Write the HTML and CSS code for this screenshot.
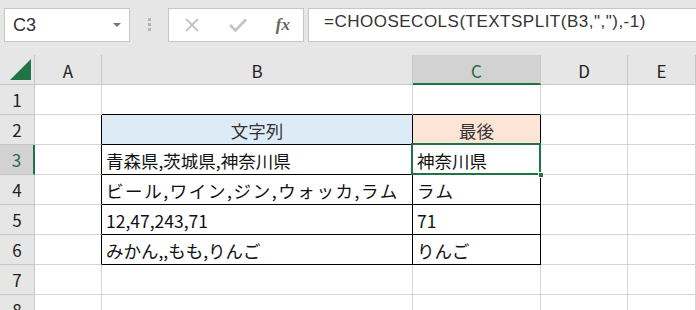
FILE: index.html
```html
<!DOCTYPE html>
<html lang="ja">
<head>
    <meta charset="utf-8">
    <title>TEXTSPLIT</title>
    <link rel="stylesheet" href="styles.css">
</head>
<body>
    <div class="toolbar">
        <div class="name-box">
            <span>C3</span>
            <span class="arrow"></span>
        </div>
        <div class="grip"><i></i><i></i><i></i></div>
        <div class="fx-buttons">
            <svg class="btn" width="18" height="18" viewBox="0 0 18 18"><path d="M3 3 L15 15 M15 3 L3 15" stroke="#c3c3c3" stroke-width="1.8" fill="none"/></svg>
            <svg class="btn" width="20" height="18" viewBox="0 0 20 18"><path d="M2 9 L7.5 14.5 L18 3.5" stroke="#c3c3c3" stroke-width="2.6" fill="none"/></svg>
            <span class="fx">fx</span>
        </div>
        <div class="formula">=CHOOSECOLS(TEXTSPLIT(B3,","),-1)</div>
    </div>

    <div class="sheet">
        <div class="corner"><span class="tri"></span></div>
        <div class="col-head">A</div>
        <div class="col-head">B</div>
        <div class="col-head active">C</div>
        <div class="col-head">D</div>
        <div class="col-head">E</div>

        <div class="row-head">1</div>
        <div class="cell"></div>
        <div class="cell above"></div>
        <div class="cell above"></div>
        <div class="cell"></div>
        <div class="cell"></div>

        <div class="row-head">2</div>
        <div class="cell before"></div>
        <div class="cell boxed head-b">文字列</div>
        <div class="cell boxed head-c">最後</div>
        <div class="cell"></div>
        <div class="cell"></div>

        <div class="row-head active">3</div>
        <div class="cell before"></div>
        <div class="cell boxed">青森県,茨城県,神奈川県</div>
        <div class="cell boxed selected">神奈川県<span class="handle"></span></div>
        <div class="cell"></div>
        <div class="cell"></div>

        <div class="row-head">4</div>
        <div class="cell before"></div>
        <div class="cell boxed kana">ビール,ワイン,ジン,ウォッカ,ラム</div>
        <div class="cell boxed kana">ラム</div>
        <div class="cell"></div>
        <div class="cell"></div>

        <div class="row-head">5</div>
        <div class="cell before"></div>
        <div class="cell boxed">12,47,243,71</div>
        <div class="cell boxed">71</div>
        <div class="cell"></div>
        <div class="cell"></div>

        <div class="row-head">6</div>
        <div class="cell before"></div>
        <div class="cell boxed">みかん,,もも,りんご</div>
        <div class="cell boxed">りんご</div>
        <div class="cell"></div>
        <div class="cell"></div>

        <div class="row-head">7</div>
        <div class="cell"></div>
        <div class="cell"></div>
        <div class="cell"></div>
        <div class="cell"></div>
        <div class="cell"></div>

        <div class="row-head">8</div>
        <div class="cell"></div>
        <div class="cell"></div>
        <div class="cell"></div>
        <div class="cell"></div>
        <div class="cell"></div>
    </div>
</body>
</html>
```

FILE: styles.css
```css
* {
    box-sizing: border-box;
}
body {
    margin: 0;
    width: 696px;
    height: 310px;
    overflow: hidden;
    background: #e6e6e6;
    font-family: "Noto Sans CJK JP", sans-serif;
    color: #111;
}
.toolbar {
    display: flex;
    align-items: flex-start;
    height: 55px;
    padding: 8px 0 0 4px;
}
.name-box {
    display: flex;
    align-items: center;
    justify-content: space-between;
    width: 126px;
    height: 34px;
    padding: 0 8px 0 8px;
    background: #fff;
    border: 1px solid #c6c6c6;
    font-family: "Liberation Sans", sans-serif;
    font-size: 18px;
    color: #333;
}
.arrow {
    width: 0;
    height: 0;
    border-left: 4px solid transparent;
    border-right: 4px solid transparent;
    border-top: 4px solid #777;
}
.grip {
    display: flex;
    flex-direction: column;
    align-items: center;
    gap: 2px;
    width: 38px;
    padding-top: 10px;
}
.grip i {
    width: 3px;
    height: 3px;
    background: #b4b4b4;
}
.fx-buttons {
    display: flex;
    align-items: center;
    justify-content: space-between;
    width: 136px;
    height: 34px;
    padding: 0 13px 0 14px;
    background: #fff;
    border: 1px solid #c6c6c6;
}
.fx {
    font-family: "Liberation Serif", serif;
    font-style: italic;
    font-weight: bold;
    font-size: 17px;
    color: #666;
}
.formula {
    flex: 1;
    height: 34px;
    margin-left: 4px;
    padding: 3px 0 0 15px;
    background: #fff;
    border: 1px solid #c6c6c6;
    border-right: none;
    font-family: "Liberation Sans", sans-serif;
    font-size: 17px;
    letter-spacing: 0.5px;
    color: #333;
}
.sheet {
    display: grid;
    grid-template-columns: 35px 67px 311px 128px 87px 68px;
    grid-auto-rows: 30px;
    background: #fff;
}
.corner,
.col-head,
.row-head {
    display: flex;
    align-items: center;
    justify-content: center;
    background: #e6e6e6;
    border-right: 1px solid #c6c6c6;
    border-bottom: 1px solid #c6c6c6;
    font-size: 17px;
    color: #222;
}
.col-head {
    padding-top: 2px;
}
.corner {
    align-items: flex-end;
    justify-content: flex-end;
    padding: 0 3px 4px 0;
}
.tri {
    width: 0;
    height: 0;
    border-left: 21px solid transparent;
    border-bottom: 21px solid #217346;
}
.col-head.active {
    background: #d2d2d2;
    color: #1e6b47;
    border-bottom: 2px solid #217346;
}
.row-head.active {
    background: #d2d2d2;
    color: #1e6b47;
    border-right: 2px solid #217346;
}
.cell {
    position: relative;
    display: flex;
    align-items: center;
    padding: 2px 4px 0;
    border-right: 1px solid #d4d4d4;
    border-bottom: 1px solid #d4d4d4;
    font-size: 17.5px;
    white-space: nowrap;
}
.cell.kana {
    letter-spacing: 1.6px;
}
.cell.above {
    border-bottom-color: #000;
}
.cell.before {
    border-right-color: #000;
}
.cell.boxed {
    border-right-color: #000;
    border-bottom-color: #000;
}
.head-b,
.head-c {
    justify-content: center;
    color: #333;
}
.head-b {
    background: #ddebf7;
}
.head-c {
    background: #fce4d6;
}
.selected::after {
    content: "";
    position: absolute;
    top: -2px;
    left: -2px;
    right: -1px;
    bottom: -1px;
    border: 2px solid #217346;
}
.handle {
    position: absolute;
    right: -4px;
    bottom: -4px;
    width: 6px;
    height: 6px;
    background: #217346;
    border: 1px solid #fff;
    z-index: 2;
}
```
